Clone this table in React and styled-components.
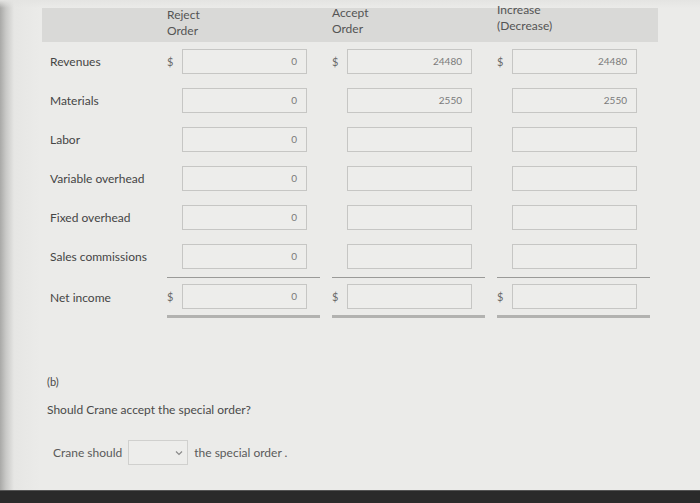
import React from 'react'
import styled, { createGlobalStyle } from 'styled-components'

const GlobalStyle = createGlobalStyle`
    html, body {
        margin: 0;
        padding: 0;
        background: #ebebe9;
    }
    body {
        font-family: Lato, "Open Sans", "Liberation Sans", sans-serif;
        color: #4d4d4d;
    }
`

const rows = [
    { label: "Revenues", dollar: true, values: ["0", "24480", "24480"] },
    { label: "Materials", values: ["0", "2550", "2550"] },
    { label: "Labor", values: ["0", "", ""] },
    { label: "Variable overhead", values: ["0", "", ""] },
    { label: "Fixed overhead", values: ["0", "", ""] },
    { label: "Sales commissions", values: ["0", "", ""] },
]

// the photo is a bit skewed, so the heads sit a little higher to the right
const heads = [
    { lines: ["Reject", "Order"], lift: 0 },
    { lines: ["Accept", "Order"], lift: 2 },
    { lines: ["Increase", "(Decrease)"], lift: 5 },
]

function Group({ dollar, value, total }) {
    return (
        <Cell total={total}>
            <Dollar>{dollar ? "$" : ""}</Dollar>
            <Box>{value}</Box>
        </Cell>
    )
}

function App() {
    return (
        <Page>
            <GlobalStyle />
            <Screen>
                <Table>
                    <Header>
                        <span />
                        {heads.map((h, i) => (
                            <HeadText key={i} lift={h.lift}>{h.lines[0]}<br />{h.lines[1]}</HeadText>
                        ))}
                    </Header>
                    {rows.map((r) => (
                        <Row key={r.label}>
                            <Label>{r.label}</Label>
                            {r.values.map((v, i) => (
                                <Group key={i} dollar={r.dollar} value={v} />
                            ))}
                        </Row>
                    ))}
                    <Row total>
                        <Label>Net income</Label>
                        <Group total dollar value="0" />
                        <Group total dollar value="" />
                        <Group total dollar value="" />
                    </Row>
                </Table>

                <Part>(b)</Part>
                <Question>Should Crane accept the special order?</Question>
                <Answer>
                    Crane should
                    <Select>
                        <svg width="8" height="6" viewBox="0 0 8 6">
                            <path d="M1 1.5 L4 4.5 L7 1.5" fill="none" stroke="#8a8a8a" strokeWidth="1.2" />
                        </svg>
                    </Select>
                    the special order .
                </Answer>
            </Screen>
            <Bezel />
        </Page>
    )
}

export default App

const Page = styled.div`
    width: 700px;
    height: 503px;
    display: flex;
    flex-direction: column;
    overflow: hidden;
    background: linear-gradient(90deg, #a9a9a7 0px, #c9c9c7 6px, #e6e6e4 14px, #ebebe9 40px);
`

const Screen = styled.div`
    flex: 1;
    padding: 8px 0 0 42px;
    display: flex;
    flex-direction: column;
    background: linear-gradient(180deg, #e4e4e2 0px, transparent 8px);
`

const Table = styled.div`
    display: flex;
    flex-direction: column;
    width: 616px;
`

const Header = styled.div`
    display: grid;
    grid-template-columns: 113px 153px 153px 153px;
    column-gap: 12px;
    height: 34px;
    background: #d9d9d7;
`

const HeadText = styled.div`
    font-size: 12px;
    line-height: 16px;
    color: #545454;
    margin-top: ${p => -1 - p.lift}px;
`

const Row = styled.div`
    display: grid;
    grid-template-columns: 113px 153px 153px 153px;
    column-gap: 12px;
    align-items: center;
    height: ${p => p.total ? 41 : 39}px;
    margin-top: ${p => p.total ? 1 : 0}px;
`

const Label = styled.div`
    font-size: 12px;
    color: #454545;
    padding-left: 8px;
`

const Cell = styled.div`
    display: flex;
    align-items: center;
    height: 100%;
    box-sizing: border-box;
    border-top: ${p => p.total ? "1px solid #9a9a98" : "none"};
    border-bottom: ${p => p.total ? "3px solid #b2b2b0" : "none"};
`

const Dollar = styled.span`
    width: 15px;
    font-size: 11px;
    color: #6a6a6a;
`

const Box = styled.div`
    width: 125px;
    height: 25px;
    box-sizing: border-box;
    border: 1px solid #c6c6c4;
    background: #ededeb;
    font-size: 10px;
    color: #7a7a7a;
    text-align: right;
    line-height: 23px;
    padding-right: 9px;
`

const Part = styled.div`
    margin-top: 57px;
    margin-left: 5px;
    font-size: 11px;
    color: #4a4a4a;
`

const Question = styled.div`
    margin-top: 14px;
    margin-left: 5px;
    font-size: 12px;
    color: #4a4a4a;
`

const Answer = styled.div`
    margin-top: 23px;
    margin-left: 11px;
    display: flex;
    align-items: center;
    gap: 6px;
    font-size: 12px;
    color: #5a5a5a;
`

const Select = styled.div`
    width: 60px;
    height: 25px;
    box-sizing: border-box;
    border: 1px solid #d0d0ce;
    background: #ededeb;
    display: flex;
    align-items: center;
    justify-content: flex-end;
    padding-right: 4px;
`

const Bezel = styled.div`
    height: 12px;
    background: #2a2a2a;
    border-top: 1px solid #555;
`
